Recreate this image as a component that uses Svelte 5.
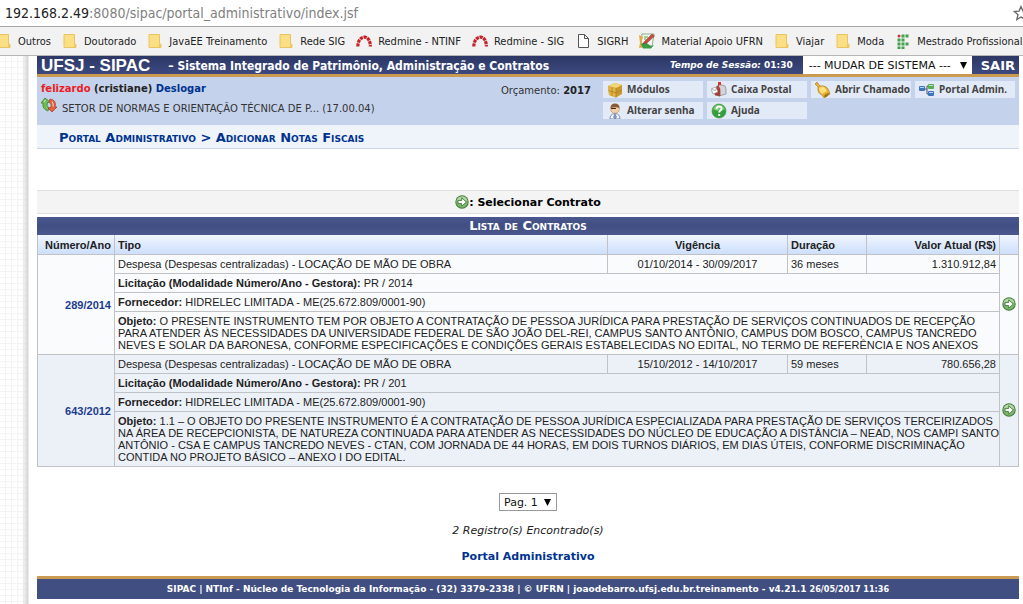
<script>
  let sistema = '0';
  let pagina = '1';

  const favoritos = [
    { nome: 'Outros', icone: 'pasta' },
    { nome: 'Doutorado', icone: 'pasta' },
    { nome: 'JavaEE Treinamento', icone: 'pasta' },
    { nome: 'Rede SIG', icone: 'pasta' },
    { nome: 'Redmine - NTINF', icone: 'redmine' },
    { nome: 'Redmine - SIG', icone: 'redmine' },
    { nome: 'SIGRH', icone: 'pagina' },
    { nome: 'Material Apoio UFRN', icone: 'material' },
    { nome: 'Viajar', icone: 'pasta' },
    { nome: 'Moda', icone: 'pasta' },
    { nome: 'Mestrado Profissional', icone: 'instituto' }
  ];

  const menu = [
    { nome: 'Módulos', icone: 'modulos' },
    { nome: 'Caixa Postal', icone: 'caixa' },
    { nome: 'Abrir Chamado', icone: 'chamado' },
    { nome: 'Portal Admin.', icone: 'portal' },
    { nome: 'Alterar senha', icone: 'senha' },
    { nome: 'Ajuda', icone: 'ajuda' }
  ];

  const contratos = [
    {
      numero: '289/2014',
      tipo: 'Despesa (Despesas centralizadas) - LOCAÇÃO DE MÃO DE OBRA',
      vigencia: '01/10/2014 - 30/09/2017',
      duracao: '36 meses',
      valor: '1.310.912,84',
      licitacao: 'PR / 2014',
      fornecedor: 'HIDRELEC LIMITADA - ME(25.672.809/0001-90)',
      objeto: 'O PRESENTE INSTRUMENTO TEM POR OBJETO A CONTRATAÇÃO DE PESSOA JURÍDICA PARA PRESTAÇÃO DE SERVIÇOS CONTINUADOS DE RECEPÇÃO PARA ATENDER ÀS NECESSIDADES DA UNIVERSIDADE FEDERAL DE SÃO JOÃO DEL-REI, CAMPUS SANTO ANTÔNIO, CAMPUS DOM BOSCO, CAMPUS TANCREDO NEVES E SOLAR DA BARONESA, CONFORME ESPECIFICAÇÕES E CONDIÇÕES GERAIS ESTABELECIDAS NO EDITAL, NO TERMO DE REFERÊNCIA E NOS ANEXOS'
    },
    {
      numero: '643/2012',
      tipo: 'Despesa (Despesas centralizadas) - LOCAÇÃO DE MÃO DE OBRA',
      vigencia: '15/10/2012 - 14/10/2017',
      duracao: '59 meses',
      valor: '780.656,28',
      licitacao: 'PR / 201',
      fornecedor: 'HIDRELEC LIMITADA - ME(25.672.809/0001-90)',
      objeto: '1.1 – O OBJETO DO PRESENTE INSTRUMENTO É A CONTRATAÇÃO DE PESSOA JURÍDICA ESPECIALIZADA PARA PRESTAÇÃO DE SERVIÇOS TERCEIRIZADOS NA ÁREA DE RECEPCIONISTA, DE NATUREZA CONTINUADA PARA ATENDER AS NECESSIDADES DO NÚCLEO DE EDUCAÇÃO A DISTÂNCIA – NEAD, NOS CAMPI SANTO ANTÔNIO - CSA E CAMPUS TANCREDO NEVES - CTAN, COM JORNADA DE 44 HORAS, EM DOIS TURNOS DIÁRIOS, EM DIAS ÚTEIS, CONFORME DISCRIMINAÇÃO CONTIDA NO PROJETO BÁSICO – ANEXO I DO EDITAL.'
    }
  ];
</script>

{#snippet seta()}
  <svg class="seta" viewBox="0 0 14 14" aria-hidden="true">
    <circle cx="7" cy="7" r="6.7" fill="#3d7a35" />
    <circle cx="7" cy="7" r="5.8" fill="#7fb56f" />
    <path d="M1.6 6a5.5 5.5 0 0 1 10.8 0Q7 4 1.6 6z" fill="#b4d5a6" />
    <path d="M3 5.4h3.7V2.8L11.4 7l-4.7 4.2V8.6H3z" fill="#fff" stroke="#3f7a38" stroke-width=".9" />
  </svg>
{/snippet}

{#snippet iconeFavorito(tipo)}
  <svg class="fav-icone" viewBox="0 0 16 16" aria-hidden="true">
    {#if tipo === 'pasta'}
      <path d="M2 1.5h10.5v9l1.5 1v3H2z" fill="#fbdf85" stroke="#e9c461" />
      <path d="M12.5 10.5l-1 4H14v-3z" fill="#edc65c" />
    {:else if tipo === 'redmine'}
      <path d="M1.8 13.5C2 8 4.3 4.7 8 4.2s6.2 3.3 6.4 9.3" fill="none" stroke="#c4232b" stroke-width="3.2" stroke-dasharray="3.2 .7" />
    {:else if tipo === 'pagina'}
      <path d="M3.5 1.5h6l4 4v9h-10zM9.5 1.5v4h4" fill="#fff" stroke="#555" />
    {:else if tipo === 'material'}
      <path d="M3 1h12l-2 13H2z" fill="#f4f7ee" stroke="#8fb389" />
      <path d="M0 2l4 2-2 6 3 4-5 1 1-5z" fill="#e8a83c" />
      <path d="M2 11q4-3 7 0t6 1l-3 3.5H4z" fill="#3b9b49" />
      <path d="M5 9L13 1l2.5 2L8 10l-4 1z" fill="#c94b3c" stroke="#70443a" stroke-width=".5" />
      <path d="M5 4h4M5 6h2" stroke="#55a055" />
    {:else}
      <circle cx="4" cy="3" r="1.5" fill="#c8383b" />
      <g fill="#45a04b">
        <path d="M6.5 1.5h3v3h-3zM10.5 1.5h3v3h-3zM2.5 5.5h3v3h-3zM6.5 5.5h3v3h-3zM2.5 9.5h3v3h-3zM6.5 9.5h3v3h-3zM10.5 9.5h3v3h-3zM2.5 13.5h3V16h-3zM6.5 13.5h3V16h-3z" />
      </g>
    {/if}
  </svg>
{/snippet}

{#snippet iconeMenu(tipo)}
  <svg class="menu-icone" viewBox="0 0 16 16" aria-hidden="true">
    {#if tipo === 'modulos'}
      <path d="M1 4l7-3 7 2v9l-6 3.5L2 13z" fill="#c99a2b" />
      <path d="M1 4l7-3 7 2-6 3z" fill="#f3d777" />
      <path d="M1 4l8 2v9.5L2 13z" fill="#e0b546" />
      <path d="M1.5 8.5L9 11l6-3M5 5v9M9 6v9.5" fill="none" stroke="#a67b22" stroke-width=".7" />
    {:else if tipo === 'caixa'}
      <path d="M5 7q0-4 4-4h2q4 0 4 4v5l-7 2z" fill="#d3d3d8" stroke="#85858f" stroke-width=".7" />
      <path d="M4 8q1-4 3-3.5t2 4V14l-5-1z" fill="#b3392f" stroke="#7c4640" stroke-width=".7" />
      <path d="M7 0h3v3H8v5H7z" fill="#d8352b" />
      <path d="M0 7l5-2 2 5-5 2z" fill="#fff" stroke="#85858f" stroke-width=".6" />
      <path d="M1 7.5L4.5 8.5l1-3" fill="none" stroke="#85858f" stroke-width=".6" />
    {:else if tipo === 'chamado'}
      <path d="M0 2l2-2 3 4q7-1 9 5l1 3-6 4-2-3Q2 11 3 5z" fill="#e9b030" stroke="#a5751b" stroke-width=".6" />
      <path d="M4 6q4-3 6 0l2 3-5 3q-3-2-3-6z" fill="#ffe07a" />
      <path d="M9 14.5q0-3 5.5-3.5l-2 3-2 1.5z" fill="#a96f18" />
    {:else if tipo === 'portal'}
      <path d="M5 7h3V4h2M8 7v5h2" fill="none" stroke="#555" />
      <rect x="0" y="4" width="6" height="5" rx="1" fill="#3f75bd" />
      <rect x="9" y="2" width="6" height="5" rx="1" fill="#55b14b" />
      <rect x="9" y="9" width="6" height="5" rx="1" fill="#3f75bd" />
      <path d="M1 5.5h4M10 3.5h4M10 10.5h4" stroke="#b9d5ef" />
    {:else if tipo === 'senha'}
      <path d="M3 16q0-5 5-5.5 5 .5 5 5.5z" fill="#f5f7fb" stroke="#6278aa" stroke-width=".8" />
      <path d="M8 11l-1.5 3L8 16l1.5-2z" fill="#8ea1cf" stroke="#4f66a2" stroke-width=".6" />
      <circle cx="8" cy="6" r="4.3" fill="#f6cfa5" stroke="#a97443" stroke-width=".5" />
      <path d="M3.5 5q0-4.5 4.5-4.5T12.5 5q-4-1.5-9 0z" fill="#8a5a35" />
      <path d="M4 5.5h5" stroke="#3d2c25" />
    {:else}
      <circle cx="8" cy="8" r="7" fill="#34a03b" stroke="#3f8a42" stroke-width=".6" />
      <path d="M2 6.5a6.2 6.2 0 0 1 12 0Q8 9 2 6.5z" fill="#6fc76b" />
      <path d="M5.5 6.2q0-2.7 2.6-2.7t2.5 2.2c0 1.5-2.4 1.7-2.4 3.8M8.2 11v2" fill="none" stroke="#fff" stroke-width="1.9" />
    {/if}
  </svg>
{/snippet}

<div class="navegador">
  <div class="endereco">
    <span class="url"><span class="host">192.168.2.49</span>:8080/sipac/portal_administrativo/index.jsf</span>
    <button class="estrela" aria-label="Adicionar aos favoritos">
      <svg viewBox="0 0 16 16"><path d="M8 1.5l1.9 4.6 4.9.4-3.8 3.2 1.2 4.8L8 11.9l-4.2 2.6L5 9.7 1.2 6.5l4.9-.4z" fill="none" stroke="#666" stroke-width="1.3" /></svg>
    </button>
  </div>
  <nav class="favoritos">
    {#each favoritos as fav}
      <a href="#{fav.nome}">{@render iconeFavorito(fav.icone)}{fav.nome}</a>
    {/each}
  </nav>
</div>

<div class="fundo">
  <div class="pagina">
    <header class="topo">
      <h1>UFSJ - SIPAC</h1>
      <span class="subtitulo">– Sistema Integrado de Patrimônio, Administração e Contratos</span>
      <span class="sessao"><em>Tempo de Sessão:</em> 01:30</span>
      <span class="combo combo-sistema">
        <select bind:value={sistema} aria-label="Mudar de sistema">
          <option value="0">--- MUDAR DE SISTEMA ---</option>
        </select>
        <svg viewBox="0 0 8 8" aria-hidden="true"><path d="M0 1h7L3.5 8z" /></svg>
      </span>
      <a class="sair" href="#sair">SAIR</a>
    </header>

    <section class="painel">
      <div class="usuario">
        <p class="nome"><span>felizardo</span> (cristiane) <a href="#deslogar">Deslogar</a></p>
        <p class="setor">
          <svg viewBox="0 0 16 16" aria-hidden="true">
            <path d="M7 14Q1 12 2 6L0 6l4-5 5 4-2.5.5Q5 9 8 11z" fill="#6cc04f" stroke="#2b7727" stroke-width=".7" />
            <path d="M9 2q7 1 5 8h2l-5 5-4-4 3-.5Q11 7 8 5z" fill="#e8603c" stroke="#a8361f" stroke-width=".7" />
            <path d="M3 5l1.5-2M11 4.5q1.500 2 1.200 5" fill="none" stroke="#f7e3c5" />
          </svg>
          SETOR DE NORMAS E ORIENTAÇÃO TÉCNICA DE P... (17.00.04)
        </p>
      </div>
      <p class="orcamento">Orçamento: <strong>2017</strong></p>
      <nav class="menu">
        {#each menu as item}
          <a href="#{item.icone}">{@render iconeMenu(item.icone)}{item.nome}</a>
        {/each}
      </nav>
    </section>

    <h2 class="caminho"><a href="#portal">Portal Administrativo</a> &gt; Adicionar Notas Fiscais</h2>

    <div class="legenda">{@render seta()}: Selecionar Contrato</div>

    <table>
      <caption>Lista de Contratos</caption>
      <colgroup>
        <col class="c-numero" />
        <col />
        <col class="c-vigencia" />
        <col class="c-duracao" />
        <col class="c-valor" />
        <col class="c-acao" />
      </colgroup>
      <thead>
        <tr>
          <th class="direita">Número/Ano</th>
          <th>Tipo</th>
          <th class="centro">Vigência</th>
          <th>Duração</th>
          <th class="direita">Valor Atual (R$)</th>
          <th></th>
        </tr>
      </thead>
      {#each contratos as c (c.numero)}
        <tbody>
          <tr>
            <td class="numero" rowspan="4">{c.numero}</td>
            <td>{c.tipo}</td>
            <td class="centro">{c.vigencia}</td>
            <td>{c.duracao}</td>
            <td class="direita">{c.valor}</td>
            <td class="acao" rowspan="4">
              <button aria-label="Selecionar Contrato {c.numero}">{@render seta()}</button>
            </td>
          </tr>
          <tr><td colspan="4"><strong>Licitação (Modalidade Número/Ano - Gestora):</strong> {c.licitacao}</td></tr>
          <tr><td colspan="4"><strong>Fornecedor:</strong> {c.fornecedor}</td></tr>
          <tr><td class="objeto" colspan="4"><strong>Objeto:</strong> {c.objeto}</td></tr>
        </tbody>
      {/each}
    </table>

    <div class="paginacao">
      <span class="combo combo-pagina">
        <select bind:value={pagina} aria-label="Página">
          <option value="1">Pag. 1</option>
        </select>
        <svg viewBox="0 0 8 8" aria-hidden="true"><path d="M0 1h7L3.5 8z" /></svg>
      </span>
      <em>2 Registro(s) Encontrado(s)</em>
      <a href="#portal">Portal Administrativo</a>
    </div>

    <footer>
      SIPAC | NTInf - Núcleo de Tecnologia da Informação - (32) 3379-2338 | © UFRN | joaodebarro.ufsj.edu.br.treinamento - v4.21.1 <small>26/05/2017 11:36</small>
    </footer>
  </div>
</div>

<style>
  :global(body) {
    margin: 0;
    background: #fff;
    font-family: Verdana, 'DejaVu Sans', sans-serif;
    font-size: 10px;
    color: #222;
  }

  p, h1, h2 {
    margin: 0;
  }

  a {
    color: inherit;
    text-decoration: none;
  }

  button {
    padding: 0;
    border: 0;
    background: none;
    cursor: pointer;
  }

  svg {
    display: block;
    flex: none;
  }

  .navegador {
    font-family: Tahoma, 'DejaVu Sans Condensed', 'DejaVu Sans', sans-serif;
    overflow: hidden;
  }

  .endereco {
    display: flex;
    justify-content: space-between;
    align-items: center;
    height: 26px;
    padding-left: 5px;
    border-bottom: 1px solid #a9a9a9;
    font-size: 14px;
    color: #808080;
  }

  .host {
    color: #222;
  }

  .estrela {
    margin-right: -6px;
  }

  .estrela svg {
    width: 16px;
    height: 16px;
  }

  .favoritos {
    display: flex;
    align-items: center;
    gap: 11px;
    height: 28px;
    margin-left: -4px;
    border-bottom: 1px solid #b6b6b6;
    background: #f2f2f2;
    font-size: 11px;
    color: #222;
    white-space: nowrap;
  }

  .favoritos a {
    display: flex;
    align-items: center;
    gap: 6px;
  }

  .fav-icone {
    width: 16px;
    height: 16px;
  }

  .fundo {
    padding-left: 29px;
    background-color: #fff;
    background-image:
      linear-gradient(90deg, transparent 22px, #d4d4d4 28px, #fff 29px),
      repeating-linear-gradient(90deg, transparent 0 5px, #f3f3f3 5px 6px),
      repeating-linear-gradient(transparent 0 5px, #f3f3f3 5px 6px);
  }

  .pagina {
    padding: 0 4px 5px 8px;
    background: #fff;
  }

  .topo {
    display: flex;
    align-items: center;
    height: 18px;
    padding: 0 4px;
    border-bottom: 3px solid #c99a50;
    background: linear-gradient(#2c3764, #3c4a80);
    color: #fff;
    white-space: nowrap;
  }

  h1 {
    padding-top: 2px;
    font: bold 17px/18px 'Liberation Sans', Arial, sans-serif;
  }

  .subtitulo {
    padding-top: 2px;
    margin-left: 18px;
    font: bold 12px/18px Tahoma, 'DejaVu Sans Condensed', sans-serif;
  }

  .sessao {
    margin-left: auto;
    font-size: 9px;
    font-weight: bold;
  }

  .combo {
    display: flex;
    align-items: center;
    background: #fff;
    color: #111;
  }

  .combo select {
    appearance: none;
    margin: 0;
    padding: 0 18px 0 4px;
    border: 0;
    border-radius: 0;
    background: none;
    font-family: inherit;
    font-size: 11px;
    color: inherit;
  }

  .combo svg {
    width: 8px;
    height: 8px;
    margin-left: -12px;
    margin-right: 4px;
    pointer-events: none;
  }

  .combo-sistema {
    height: 18px;
    margin: 0 9px 0 10px;
  }

  .combo-sistema select {
    padding: 0 20px 0 6px;
  }

  .sair {
    font-size: 13px;
    font-weight: bold;
  }

  .painel {
    display: flex;
    height: 44px;
    padding: 4px 4px 0 4px;
    background: #c4d2eb;
    color: #333;
  }

  .usuario {
    flex: 1;
  }

  .nome {
    line-height: 16px;
    font-weight: bold;
    color: #222;
  }

  .nome span {
    color: #ed1c24;
  }

  .nome a {
    color: #003390;
  }

  .setor {
    display: flex;
    align-items: center;
    gap: 5px;
    line-height: 24px;
  }

  .setor svg {
    width: 16px;
    height: 16px;
    margin-bottom: 8px;
  }

  .orcamento {
    margin-right: 12px;
    line-height: 20px;
  }

  .orcamento strong {
    color: #222;
  }

  .menu {
    display: grid;
    grid-template-columns: repeat(4, 100px);
    grid-auto-rows: 17px;
    gap: 4px;
  }

  .menu a {
    display: flex;
    align-items: center;
    gap: 4px;
    padding-left: 4px;
    background: #e3eaf7;
    font: bold 10px/17px 'Noto Sans', sans-serif;
    color: #444;
    white-space: nowrap;
  }

  .menu-icone {
    width: 16px;
    height: 16px;
  }

  .caminho {
    padding: 3px 0 0 22px;
    border-bottom: 1px solid #c8d5ec;
    background: #eff3fa;
    font-size: 13px;
    line-height: 20px;
    font-variant: small-caps;
    color: #003390;
  }

  .legenda {
    display: flex;
    justify-content: center;
    align-items: center;
    height: 22px;
    margin: 41px 0 3px;
    border-top: 1px solid #dedfe3;
    border-bottom: 1px solid #dedfe3;
    background: #f4f4f4;
    font-size: 11px;
    font-weight: bold;
    color: #000;
  }

  .seta {
    width: 14px;
    height: 14px;
  }

  table {
    width: 100%;
    table-layout: fixed;
    border-collapse: collapse;
    font: 11px/12px Arial, 'Liberation Sans', sans-serif;
    color: #222;
  }

  caption {
    background: linear-gradient(#4a5890, #404e82 50%, #4a5890);
    font: bold 13px/18px Verdana, 'DejaVu Sans', sans-serif;
    font-variant: small-caps;
    color: #fff;
  }

  .c-numero { width: 77px; }
  .c-vigencia { width: 180px; }
  .c-duracao { width: 79px; }
  .c-valor { width: 133px; }
  .c-acao { width: 19px; }

  th, td {
    padding: 3px;
    border: 1px solid #c0c2c6;
    text-align: left;
  }

  th {
    height: 13px;
    border-top: 0;
    background: linear-gradient(#f0f5ff, #cddffb);
  }

  tbody {
    background: #f9fbfd;
  }

  tbody:nth-of-type(even) {
    background: #ecf1f8;
  }

  td.objeto {
    padding-right: 0;
  }

  th.direita, td.direita, td.numero {
    text-align: right;
  }

  th.centro, td.centro {
    text-align: center;
  }

  .numero {
    font-weight: bold;
    color: #1d3c8f;
  }

  td.acao {
    padding: 0 2px;
  }

  .paginacao {
    display: flex;
    flex-direction: column;
    align-items: center;
    margin: 26px 0 12px;
    font-size: 11px;
    line-height: 14px;
  }

  .combo-pagina {
    height: 16px;
    border: 1px solid #999;
  }

  .paginacao em {
    margin: 13px 0 12px;
  }

  .paginacao a {
    font-weight: bold;
    color: #003390;
  }

  footer {
    border-top: 3px solid #c99a50;
    background: #404e82;
    font-size: 9px;
    font-weight: bold;
    line-height: 20px;
    text-align: center;
    color: #fff;
  }

  footer small {
    font-size: 9px;
    font-family: Tahoma, 'DejaVu Sans Condensed', sans-serif;
  }
</style>
